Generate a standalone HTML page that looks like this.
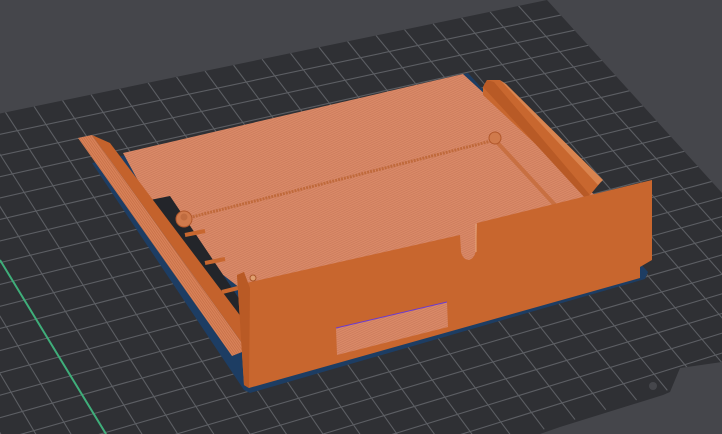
<!DOCTYPE html>
<html><head><meta charset="utf-8"><style>
html,body{margin:0;padding:0;background:#45464b;width:722px;height:434px;overflow:hidden}
svg{display:block}
</style></head><body>
<svg id="s" width="722" height="434" viewBox="0 0 722 434" xmlns="http://www.w3.org/2000/svg">
<defs>
<pattern id="tex" width="2" height="2" patternUnits="userSpaceOnUse" patternTransform="rotate(-25)">
<rect width="2" height="2" fill="#db8b68"/><rect width="2" height="0.7" fill="#c9785a"/>
</pattern>
<pattern id="tex2" width="2" height="2" patternUnits="userSpaceOnUse" patternTransform="rotate(55)">
<rect width="2" height="2" fill="#d9835a"/><rect width="2" height="0.7" fill="#c46d44"/>
</pattern>
<clipPath id="pc"><polygon points="-200,155 547,0 722,193 722,362 680,368 670,392 663,395 560,427 540,434 -200,434"/></clipPath>
</defs>
<rect width="722" height="434" fill="#45464b"/>
<polygon points="-200,155 547,0 722,193 722,362 680,368 670,392 663,395 560,427 540,434 -200,434" fill="#2f3034"/>
<g id="grid" clip-path="url(#pc)" stroke="#5c5e63" stroke-width="1.1" fill="none"></g>
<line x1="0" y1="260" x2="106" y2="434" stroke="#3fae7a" stroke-width="2"/>
<circle cx="653" cy="386" r="4" fill="#45464b"/>
<polygon points="92,163 468,73 648,272 645,279 250,393 244,390" fill="#1d3d63"/>
<polygon points="123,153 463,74 600,200 560,212 240,288 165,230" fill="url(#tex)"/>
<polygon points="455,236 480,222 480,262 455,266" fill="url(#tex)"/>
<polygon points="150,200 170,196 240,300 240,330 232,318" fill="#23252a"/>
<line x1="185" y1="235" x2="205" y2="231" stroke="#c8672f" stroke-width="4"/>
<line x1="205" y1="263" x2="225" y2="259" stroke="#c8672f" stroke-width="4"/>
<line x1="222" y1="292" x2="238" y2="288" stroke="#c8672f" stroke-width="4"/>
<line x1="184" y1="219" x2="495" y2="140" stroke="#c06a3c" stroke-width="3" stroke-dasharray="2 1"/>
<line x1="495" y1="140" x2="555" y2="205" stroke="#c87042" stroke-width="4"/>
<circle cx="184" cy="219" r="8" fill="#d07a4c" stroke="#b2582c"/>
<circle cx="184" cy="217" r="3.5" fill="#c06c40"/>
<circle cx="495" cy="138" r="6" fill="#d07a4c" stroke="#b2582c"/>
<polygon points="483,87 487,80 500,80 600,183 590,195 483,95" fill="#c8672f"/>
<polygon points="500,80 506,84 603,180 598,185" fill="#d9844f"/>
<polygon points="483,87 487,80 494,82 590,195 585,198" fill="#b85a26"/>
<polygon points="92,135 110,143 242,318 247,350" fill="#c4622c"/>
<polygon points="78,138 92,135 247,350 232,356" fill="url(#tex2)"/>
<path d="M237,275 L244,272 L246,283 L460,235 L461,252 Q463,260 469,260 Q475,258 476,250 L477,223 L652,180 L652,260 L640,267 L640,278 L249,388 L244,385 Z" fill="#c8662e"/>
<polygon points="237,275 244,272 250,288 249,388 244,385" fill="#b95a25"/>
<line x1="476" y1="224" x2="476" y2="252" stroke="#e6a57a" stroke-width="1"/>
<circle cx="253" cy="278" r="3" fill="#e0a070" stroke="#a9552a"/>
<polygon points="336,328 447,302 448,327 337,355" fill="url(#tex)"/>
<line x1="336" y1="328" x2="447" y2="302" stroke="#6a3bd0" stroke-width="1"/>
</svg>
<script>
(function(){
var TL=[-80,130],TR=[547,0],BR=[852,332],BL=[175,546],N=22;
function L(a,b,t){return [a[0]+(b[0]-a[0])*t,a[1]+(b[1]-a[1])*t];}
var g=document.getElementById('grid'),s='';
for(var i=-8;i<N;i++){var t=i/N;var p=L(TL,TR,t),q=L(BL,BR,t);
s+='<line x1="'+p[0]+'" y1="'+p[1]+'" x2="'+q[0]+'" y2="'+q[1]+'"/>';}
for(var i=1;i<N;i++){var t=i/N;var p=L(TL,BL,t),q=L(TR,BR,t);
var p2=[p[0]+(p[0]-q[0])*0.5,p[1]+(p[1]-q[1])*0.5];
s+='<line x1="'+p2[0]+'" y1="'+p2[1]+'" x2="'+q[0]+'" y2="'+q[1]+'"/>';}
g.innerHTML=s;
})();
</script>
</body></html>
